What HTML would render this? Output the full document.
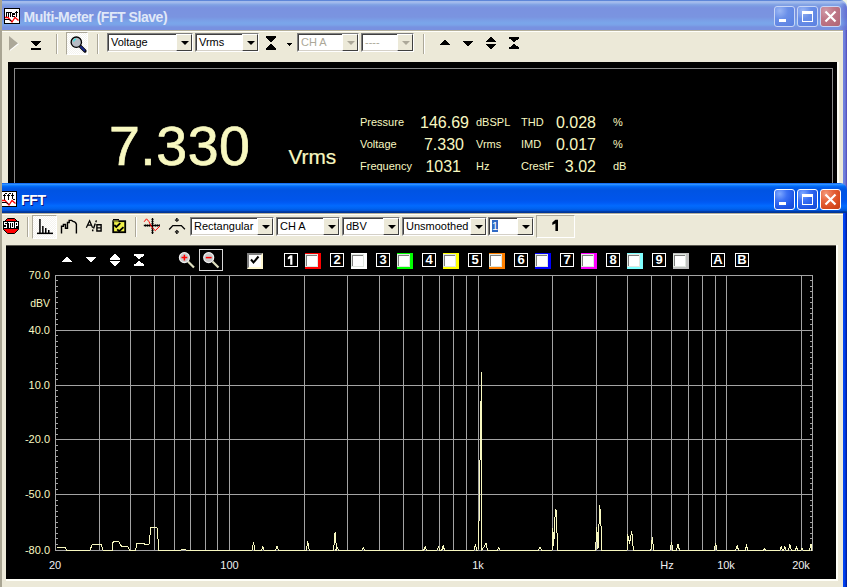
<!DOCTYPE html>
<html><head><meta charset="utf-8"><style>
*{margin:0;padding:0;box-sizing:border-box}
html,body{width:847px;height:587px;overflow:hidden;background:#ece9d8;font-family:"Liberation Sans",sans-serif;position:relative}
.a{position:absolute}
svg{position:absolute;left:0;top:0}
.cream{color:#f8f8c0}
.ttl{font-weight:bold;font-size:13px;white-space:nowrap;line-height:16px}
.t11{font-size:11px;white-space:nowrap;line-height:13px}
.combo{position:absolute;height:19px;background:#fff;border-top:1px solid #808080;border-left:1px solid #808080;border-bottom:1px solid #fff;border-right:1px solid #fff}
.combo .in{position:absolute;left:0;top:0;right:0;bottom:0;border-top:1px solid #404040;border-left:1px solid #404040;border-bottom:1px solid #d4d0c8;border-right:1px solid #d4d0c8}
.combo .txt{position:absolute;left:3px;top:2px;font-size:11px;line-height:13px;color:#000;white-space:nowrap}
.combo .btn{position:absolute;top:0;right:0;width:16px;bottom:0;background:#ece9d8;border-top:1px solid #fff;border-left:1px solid #fff;border-bottom:1px solid #404040;border-right:1px solid #404040}
.combo .btn i{position:absolute;left:4px;top:6px;width:0;height:0;border-left:4px solid transparent;border-right:4px solid transparent;border-top:4px solid #000}
.combo.dis .txt{color:#aca899}
.combo.dis .btn i{border-top-color:#aca899}
.sep{position:absolute;width:2px;border-left:1px solid #aca899;border-right:1px solid #fff}
.press{position:absolute;border-top:1px solid #aca899;border-left:1px solid #aca899;border-bottom:1px solid #fff;border-right:1px solid #fff;background-color:#f4f3ee;background-image:linear-gradient(45deg,#fff 25%,transparent 25%,transparent 75%,#fff 75%),linear-gradient(45deg,#fff 25%,transparent 25%,transparent 75%,#fff 75%);background-size:2px 2px;background-position:0 0,1px 1px}
.nb{position:absolute;width:14px;height:14px;border:1px solid #fff;color:#fff;font-size:13px;font-weight:bold;line-height:12px;text-align:center}
.cb{position:absolute;width:16px;height:16px;background:#fff;border-top:1px solid #808080;border-left:1px solid #808080;border-right:2px solid #f00;border-bottom:2px solid #f00}
.cb i{position:absolute;left:0;top:0;right:0;bottom:0;border-top:1px solid #404040;border-left:1px solid #404040;border-right:1px solid #e0ded4;border-bottom:1px solid #e0ded4}
</style></head><body>
<div class="a" style="left:838px;top:0;width:9px;height:9px;background:#f0f4e4"></div>
<div class="a" style="left:2px;top:0;width:845px;height:30px;border-radius:0 7px 0 0;background:linear-gradient(180deg,#5e86d8 0,#5e86d8 1px,#a4bcec 1px,#a0b8ec 3px,#86a8e6 4px,#7c9ae2 6px,#7a92e0 8px,#7a94e0 17px,#7a9ee6 20px,#7aa6ea 23px,#7aa2e8 25px,#7892e0 27px,#7890e0 30px)"></div>
<div class="a" style="left:843px;top:30px;width:4px;height:160px;background:linear-gradient(90deg,#7282e2,#6e7ed8 50%,#5048b8)"></div>
<div class="a" style="left:837px;top:62px;width:2px;height:130px;background:#fdfdf4"></div>
<div class="a" style="left:2px;top:30px;width:841px;height:32px;background:#ece9d8;border-top:1px solid #b4b09c"><div class="a" style="left:0;top:0;width:841px;height:1px;background:#fffffa"></div></div>
<svg width="847" height="587" style="pointer-events:none"><g transform="translate(4,8)" shape-rendering="crispEdges"><rect x="0" y="0" width="16" height="16" fill="#000"/><rect x="1" y="1" width="14" height="14" fill="#fff"/><rect x="2" y="4" width="6" height="1" fill="#000"/><rect x="2" y="4" width="1" height="5" fill="#000"/><rect x="4" y="4" width="1" height="5" fill="#000"/><rect x="6" y="4" width="1" height="5" fill="#000"/><rect x="8" y="5" width="3" height="1" fill="#000"/><rect x="8" y="5" width="1" height="4" fill="#000"/><rect x="8" y="8" width="3" height="1" fill="#000"/><rect x="9" y="6" width="2" height="1" fill="#000"/><rect x="12" y="3" width="1" height="6" fill="#000"/><rect x="11" y="4" width="3" height="1" fill="#000"/><rect x="1" y="11" width="3" height="1" fill="#000"/></g><g transform="translate(4,8)"><path d="M1,9.5 H4 L8,14 L11,9.5 L14.5,12.5" stroke="#f00" stroke-width="1.3" fill="none"/><path d="M1,11.5 H5 L7.5,13" stroke="#000" stroke-width="1" fill="none"/></g></svg>
<div class="a ttl" style="left:23.5px;top:9px;color:#e0e8f8;font-size:14px;letter-spacing:-0.45px">Multi-Meter (FFT Slave)</div>
<div class="a" style="left:840px;top:2px;width:7px;height:28px;border-radius:0 7px 0 0;background:linear-gradient(90deg,rgba(80,80,200,0),rgba(80,80,200,.55))"></div>
<div class="a" style="left:774px;top:6px;width:21px;height:21px;border:1px solid #c8d6f6;border-radius:3px;background:radial-gradient(circle at 25% 20%,#9ab6f4 0,#6a8fe8 40%,#5a80e0 100%)"></div>
<div class="a" style="left:797px;top:6px;width:21px;height:21px;border:1px solid #c8d6f6;border-radius:3px;background:radial-gradient(circle at 25% 20%,#9ab6f4 0,#6a8fe8 40%,#5a80e0 100%)"></div>
<div class="a" style="left:820px;top:6px;width:21px;height:21px;border:1px solid #c8d6f6;border-radius:3px;background:radial-gradient(circle at 25% 20%,#d09aa8 0,#c07888 40%,#b06474 100%)"></div>
<div class="a" style="left:779px;top:19px;width:7px;height:3px;background:#ffffff"></div>
<div class="a" style="left:802px;top:11px;width:11px;height:11px;border:1px solid #ffffff;border-top-width:3px"></div>
<svg width="847" height="587" style="pointer-events:none"><path d="M825.5,11.5 L835.5,21.5 M835.5,11.5 L825.5,21.5" stroke="#ffffff" stroke-width="2.2"/></svg>
<svg width="847" height="587" style="pointer-events:none"><path d="M10,37 L19,44 L10,51 Z" fill="#fff"/><path d="M9,36 L18,43.3 L9,50.5 Z" fill="#aca899"/><g shape-rendering="crispEdges"><rect x="444.0" y="40" width="2" height="1" fill="#000"/><rect x="443.0" y="41" width="4" height="1" fill="#000"/><rect x="442.0" y="42" width="6" height="1" fill="#000"/><rect x="441.0" y="43" width="8" height="1" fill="#000"/><rect x="440.0" y="44" width="10" height="1" fill="#000"/><rect x="463.0" y="41" width="10" height="1" fill="#000"/><rect x="464.0" y="42" width="8" height="1" fill="#000"/><rect x="465.0" y="43" width="6" height="1" fill="#000"/><rect x="466.0" y="44" width="4" height="1" fill="#000"/><rect x="467.0" y="45" width="2" height="1" fill="#000"/><rect x="490.0" y="37" width="2" height="1" fill="#000"/><rect x="489.0" y="38" width="4" height="1" fill="#000"/><rect x="488.0" y="39" width="6" height="1" fill="#000"/><rect x="487.0" y="40" width="8" height="1" fill="#000"/><rect x="486.0" y="41" width="10" height="1" fill="#000"/><rect x="486.0" y="44" width="10" height="1" fill="#000"/><rect x="487.0" y="45" width="8" height="1" fill="#000"/><rect x="488.0" y="46" width="6" height="1" fill="#000"/><rect x="489.0" y="47" width="4" height="1" fill="#000"/><rect x="490.0" y="48" width="2" height="1" fill="#000"/><rect x="509" y="37" width="10" height="1" fill="#000"/><rect x="509.25" y="38" width="9.5" height="1" fill="#000"/><rect x="510.5" y="39" width="7.0" height="1" fill="#000"/><rect x="511.75" y="40" width="4.5" height="1" fill="#000"/><rect x="513.0" y="41" width="2.0" height="1" fill="#000"/><rect x="513.0" y="44" width="2.0" height="1" fill="#000"/><rect x="511.75" y="45" width="4.5" height="1" fill="#000"/><rect x="510.5" y="46" width="7.0" height="1" fill="#000"/><rect x="509.25" y="47" width="9.5" height="1" fill="#000"/><rect x="509" y="48" width="10" height="1" fill="#000"/><rect x="266" y="36" width="10" height="1" fill="#000"/><rect x="266.0" y="37" width="10" height="1" fill="#000"/><rect x="267.0" y="38" width="8" height="1" fill="#000"/><rect x="268.0" y="39" width="6" height="1" fill="#000"/><rect x="269.0" y="40" width="4" height="1" fill="#000"/><rect x="270.0" y="41" width="2" height="1" fill="#000"/><rect x="270.0" y="44" width="2" height="1" fill="#000"/><rect x="269.0" y="45" width="4" height="1" fill="#000"/><rect x="268.0" y="46" width="6" height="1" fill="#000"/><rect x="267.0" y="47" width="8" height="1" fill="#000"/><rect x="266.0" y="48" width="10" height="1" fill="#000"/><rect x="266" y="49" width="10" height="1" fill="#000"/><rect x="287.0" y="43" width="5" height="1" fill="#000"/><rect x="288.0" y="44" width="3" height="1" fill="#000"/><rect x="289.0" y="45" width="1" height="1" fill="#000"/><rect x="31.0" y="41" width="10" height="1" fill="#000"/><rect x="32.0" y="42" width="8" height="1" fill="#000"/><rect x="33.0" y="43" width="6" height="1" fill="#000"/><rect x="34.0" y="44" width="4" height="1" fill="#000"/><rect x="35.0" y="45" width="2" height="1" fill="#000"/><rect x="31" y="48" width="10" height="2" fill="#000"/></g><path d="M287,43 H292 L289.5,45.5 Z" fill="#000"/></svg>
<div class="sep" style="left:56px;top:34px;height:20px"></div>
<div class="press" style="left:66px;top:32px;width:22px;height:23px"></div>
<svg width="847" height="587" style="pointer-events:none"><path d="M80.5,46.5 L85,51" stroke="#000" stroke-width="3.2" stroke-linecap="round"/><path d="M80.5,46.5 L84.5,50.5" stroke="#1a2a8a" stroke-width="1.8" stroke-linecap="round"/><circle cx="76.3" cy="42.2" r="5.2" fill="#b8bcc4" stroke="#000" stroke-width="1.3"/><path d="M73.5,41.5 Q74,39.5 76,39" stroke="#40e0e0" stroke-width="1.3" fill="none"/></svg>
<div class="sep" style="left:97px;top:34px;height:20px"></div>
<div class="sep" style="left:423px;top:34px;height:20px"></div>
<div class="combo" style="left:107px;top:33px;width:86px"><div class="in"></div><div class="txt">Voltage</div><div class="btn"><i></i></div></div>
<div class="combo" style="left:195px;top:33px;width:64px"><div class="in"></div><div class="txt">Vrms</div><div class="btn"><i></i></div></div>
<div class="combo dis" style="left:297px;top:33px;width:62px"><div class="in"></div><div class="txt">CH A</div><div class="btn"><i></i></div></div>
<div class="combo dis" style="left:361px;top:33px;width:53px"><div class="in"></div><div class="txt">----</div><div class="btn"><i></i></div></div>
<div class="a" style="left:8px;top:62px;width:829px;height:130px;background:#000"></div>
<div class="a" style="left:14px;top:68px;width:819px;height:130px;border:1px solid #8a8a8a"></div>
<div class="a cream" style="left:109px;top:114px;font-size:55.5px;line-height:64px;-webkit-text-stroke:0.7px #f8f8c0;letter-spacing:0.5px">7.330</div>
<div class="a cream" style="left:288.5px;top:144.5px;font-size:20.8px;line-height:24px;-webkit-text-stroke:0.2px #f8f8c0">Vrms</div>
<div class="a" style="left:360px;top:116px;font-size:11px;line-height:13px;color:#f8f8c0;white-space:nowrap">Pressure</div>
<div class="a" style="left:476px;top:116px;font-size:11px;line-height:13px;color:#f8f8c0;white-space:nowrap">dBSPL</div>
<div class="a" style="left:521px;top:116px;font-size:11px;line-height:13px;color:#f8f8c0;white-space:nowrap">THD</div>
<div class="a" style="left:613px;top:116px;font-size:11px;line-height:13px;color:#f8f8c0;white-space:nowrap">%</div>
<div class="a" style="left:360px;top:138px;font-size:11px;line-height:13px;color:#f8f8c0;white-space:nowrap">Voltage</div>
<div class="a" style="left:476px;top:138px;font-size:11px;line-height:13px;color:#f8f8c0;white-space:nowrap">Vrms</div>
<div class="a" style="left:521px;top:138px;font-size:11px;line-height:13px;color:#f8f8c0;white-space:nowrap">IMD</div>
<div class="a" style="left:613px;top:138px;font-size:11px;line-height:13px;color:#f8f8c0;white-space:nowrap">%</div>
<div class="a" style="left:360px;top:160px;font-size:11px;line-height:13px;color:#f8f8c0;white-space:nowrap">Frequency</div>
<div class="a" style="left:476px;top:160px;font-size:11px;line-height:13px;color:#f8f8c0;white-space:nowrap">Hz</div>
<div class="a" style="left:521px;top:160px;font-size:11px;line-height:13px;color:#f8f8c0;white-space:nowrap">CrestF</div>
<div class="a" style="left:613px;top:160px;font-size:11px;line-height:13px;color:#f8f8c0;white-space:nowrap">dB</div>
<div class="a cream" style="left:400px;top:113px;width:69px;text-align:right;font-size:16px;line-height:19px">146.69</div>
<div class="a cream" style="left:400px;top:135px;width:64px;text-align:right;font-size:16px;line-height:19px">7.330</div>
<div class="a cream" style="left:400px;top:157px;width:61px;text-align:right;font-size:16px;line-height:19px">1031</div>
<div class="a cream" style="left:539px;top:113px;width:57px;text-align:right;font-size:16px;line-height:19px">0.028</div>
<div class="a cream" style="left:539px;top:135px;width:57px;text-align:right;font-size:16px;line-height:19px">0.017</div>
<div class="a cream" style="left:539px;top:157px;width:57px;text-align:right;font-size:16px;line-height:19px">3.02</div>
<div class="a" style="left:2px;top:183px;width:845px;height:30px;border-radius:0 7px 0 0;background:linear-gradient(180deg,#0058ee 0%,#3593ff 4%,#288eff 6%,#127dff 8%,#036ffc 10%,#0262ee 14%,#0057e5 20%,#0054e3 24%,#0055eb 56%,#005bf5 66%,#026afe 76%,#0062ef 86%,#0052d6 92%,#0040ab 94%,#003092 100%)"></div>
<div class="a" style="left:843px;top:213px;width:4px;height:374px;background:linear-gradient(90deg,#0444f4 0,#0040ee 40%,#0030c8 65%,#001890 100%)"></div>
<div class="a" style="left:2px;top:213px;width:841px;height:374px;background:#ece9d8;border-top:1px solid #b4b09c"><div class="a" style="left:0;top:0;width:841px;height:1px;background:#fffffa"></div></div>
<div class="a ttl" style="left:21px;top:192px;color:#fff;font-size:14px;letter-spacing:-0.3px;text-shadow:1px 1px 0 #0a1883">FFT</div>
<div class="a" style="left:774px;top:189px;width:21px;height:21px;border:1px solid #ffffff;border-radius:3px;background:radial-gradient(circle at 25% 20%,#7ea8ff 0,#3a70f4 35%,#1c54e4 70%,#1448d0 100%)"></div>
<div class="a" style="left:797px;top:189px;width:21px;height:21px;border:1px solid #ffffff;border-radius:3px;background:radial-gradient(circle at 25% 20%,#7ea8ff 0,#3a70f4 35%,#1c54e4 70%,#1448d0 100%)"></div>
<div class="a" style="left:820px;top:189px;width:21px;height:21px;border:1px solid #ffffff;border-radius:3px;background:radial-gradient(circle at 25% 20%,#f49a7c 0,#e6643c 35%,#d84a1e 70%,#c23c14 100%)"></div>
<div class="a" style="left:779px;top:202px;width:7px;height:3px;background:#ffffff"></div>
<div class="a" style="left:802px;top:194px;width:11px;height:11px;border:1px solid #ffffff;border-top-width:3px"></div>
<svg width="847" height="587" style="pointer-events:none"><path d="M825.5,194.5 L835.5,204.5 M835.5,194.5 L825.5,204.5" stroke="#ffffff" stroke-width="2.2"/></svg>
<svg width="847" height="587" style="pointer-events:none"><g transform="translate(1,191)" shape-rendering="crispEdges"><rect x="0" y="0" width="16" height="16" fill="#000"/><rect x="1" y="1" width="14" height="14" fill="#fff"/><rect x="3" y="3" width="1" height="6" fill="#000"/><rect x="2" y="4" width="3" height="1" fill="#000"/><rect x="4" y="2" width="2" height="1" fill="#000"/><rect x="7" y="3" width="1" height="6" fill="#000"/><rect x="6" y="4" width="3" height="1" fill="#000"/><rect x="8" y="2" width="2" height="1" fill="#000"/><rect x="11" y="2" width="1" height="6" fill="#000"/><rect x="10" y="4" width="3" height="1" fill="#000"/><rect x="12" y="8" width="2" height="1" fill="#000"/><rect x="1" y="11" width="3" height="1" fill="#000"/></g><g transform="translate(1,191)"><path d="M1,9.5 H4 L8,14 L11,9.5 L14.5,12.5" stroke="#f00" stroke-width="1.3" fill="none"/><path d="M1,11.5 H5 L7.5,13" stroke="#000" stroke-width="1" fill="none"/></g></svg>
<div class="sep" style="left:27px;top:217px;height:20px"></div>
<div class="press" style="left:32px;top:215px;width:25px;height:24px"></div>
<div class="sep" style="left:135px;top:217px;height:20px"></div>
<svg width="847" height="587" style="pointer-events:none"><path d="M7.5,218.5 H14.5 L18.5,222.5 V229.5 L14.5,233.5 H7.5 L3.5,229.5 V222.5 Z" fill="#f00" stroke="#000" stroke-width="1"/><rect x="3" y="221" width="16" height="8" fill="#000"/><g shape-rendering="crispEdges" fill="#fff"><rect x="4.0" y="222" width="1.2" height="1"/><rect x="5.0" y="222" width="1.2" height="1"/><rect x="6.0" y="222" width="1.2" height="1"/><rect x="4.0" y="223" width="1.2" height="1"/><rect x="4.0" y="224" width="1.2" height="1"/><rect x="5.0" y="224" width="1.2" height="1"/><rect x="6.0" y="224" width="1.2" height="1"/><rect x="6.0" y="225" width="1.2" height="1"/><rect x="6.0" y="226" width="1.2" height="1"/><rect x="4.0" y="227" width="1.2" height="1"/><rect x="5.0" y="227" width="1.2" height="1"/><rect x="6.0" y="227" width="1.2" height="1"/><rect x="7.6" y="222" width="1.2" height="1"/><rect x="8.6" y="222" width="1.2" height="1"/><rect x="9.6" y="222" width="1.2" height="1"/><rect x="8.6" y="223" width="1.2" height="1"/><rect x="8.6" y="224" width="1.2" height="1"/><rect x="8.6" y="225" width="1.2" height="1"/><rect x="8.6" y="226" width="1.2" height="1"/><rect x="8.6" y="227" width="1.2" height="1"/><rect x="11.2" y="222" width="1.2" height="1"/><rect x="12.2" y="222" width="1.2" height="1"/><rect x="13.2" y="222" width="1.2" height="1"/><rect x="11.2" y="223" width="1.2" height="1"/><rect x="13.2" y="223" width="1.2" height="1"/><rect x="11.2" y="224" width="1.2" height="1"/><rect x="13.2" y="224" width="1.2" height="1"/><rect x="11.2" y="225" width="1.2" height="1"/><rect x="13.2" y="225" width="1.2" height="1"/><rect x="11.2" y="226" width="1.2" height="1"/><rect x="13.2" y="226" width="1.2" height="1"/><rect x="11.2" y="227" width="1.2" height="1"/><rect x="12.2" y="227" width="1.2" height="1"/><rect x="13.2" y="227" width="1.2" height="1"/><rect x="14.8" y="222" width="1.2" height="1"/><rect x="15.8" y="222" width="1.2" height="1"/><rect x="16.8" y="222" width="1.2" height="1"/><rect x="14.8" y="223" width="1.2" height="1"/><rect x="16.8" y="223" width="1.2" height="1"/><rect x="14.8" y="224" width="1.2" height="1"/><rect x="16.8" y="224" width="1.2" height="1"/><rect x="14.8" y="225" width="1.2" height="1"/><rect x="15.8" y="225" width="1.2" height="1"/><rect x="16.8" y="225" width="1.2" height="1"/><rect x="14.8" y="226" width="1.2" height="1"/><rect x="14.8" y="227" width="1.2" height="1"/></g><g fill="#000"><rect x="37" y="232.6" width="16" height="1.5"/><rect x="39.2" y="219" width="1.5" height="14"/><rect x="42.1" y="226" width="1.5" height="7"/><rect x="45" y="228" width="1.5" height="5"/><rect x="48" y="230" width="1.5" height="3"/></g><path d="M61.5,233.5 V226.2 H63.4 V224.5 H65.5 V228.3 H67.5 V222.5 H69.2 V220.4 H71.6 L73,221.4 L74.5,221.8 L75.6,222.8 L76.4,224.2 V233.5" stroke="#000" stroke-width="1.4" fill="none" stroke-linejoin="miter"/><path d="M86.3,227.8 L89.6,220.8 L92.6,227.8 M87.6,225.2 H91.6" stroke="#000" stroke-width="1.25" fill="none"/><path d="M96.4,220.4 L95.8,222.2 M95.3,223.5 L93.5,228.5 M93,229.5 L92.5,231.3" stroke="#000" stroke-width="1.4"/><path d="M96.9,224.8 H101.1 V231 H96.9 Z M96.9,227.9 H101.1" stroke="#000" stroke-width="1.4" fill="none"/><rect x="113.2" y="221.2" width="12" height="11" fill="#f2f24a" stroke="#000" stroke-width="1.8"/><rect x="113" y="219" width="6" height="1.6" fill="#000"/><rect x="113.5" y="220.6" width="5" height="1" fill="#f2f24a"/><path d="M114.3,225 L116.3,226.9 L120.3,223.2 M117.2,229.3 L119.2,231.2 L123.5,227.2" stroke="#000" stroke-width="1.8" fill="none"/><path d="M143.8,225.5 H159.8 M152.5,218 V234" stroke="#000" stroke-width="1.3"/><g fill="#000" opacity="0.45"><rect x="145" y="224" width="1" height="3"/><rect x="147" y="224" width="1" height="3"/><rect x="149" y="224" width="1" height="3"/><rect x="155" y="224" width="1" height="3"/><rect x="157" y="224" width="1" height="3"/><rect x="159" y="224" width="1" height="3"/><rect x="151" y="219" width="3" height="1"/><rect x="151" y="221" width="3" height="1"/><rect x="151" y="223" width="3" height="1"/><rect x="151" y="228" width="3" height="1"/><rect x="151" y="230" width="3" height="1"/><rect x="151" y="232" width="3" height="1"/></g><path d="M144.1,221.8 L146.5,218.8 L148.9,221.5 L151.8,227.4 L155.3,230.6 L159.8,226.2" stroke="#f00" stroke-width="1" fill="none"/><path d="M169.2,229.5 L172.8,225.6 H181.3 L184.9,229.2" stroke="#000" stroke-width="1.3" fill="none"/><path d="M175,219.6 L176.9,221.3 L178.8,219.6" stroke="#000" stroke-width="1.1" fill="none"/><circle cx="176.9" cy="219" r="1" fill="#000"/><path d="M175,232.4 L176.9,230.6 L178.8,232.4" stroke="#000" stroke-width="1.1" fill="none"/><circle cx="176.9" cy="233" r="1" fill="#000"/></svg>
<div class="combo" style="left:190px;top:217px;width:84px"><div class="in"></div><div class="txt">Rectangular</div><div class="btn"><i></i></div></div>
<div class="combo" style="left:276px;top:217px;width:64px"><div class="in"></div><div class="txt">CH A</div><div class="btn"><i></i></div></div>
<div class="combo" style="left:342px;top:217px;width:58px"><div class="in"></div><div class="txt">dBV</div><div class="btn"><i></i></div></div>
<div class="combo" style="left:402px;top:217px;width:85px"><div class="in"></div><div class="txt">Unsmoothed</div><div class="btn"><i></i></div></div>
<div class="combo" style="left:488px;top:217px;width:46px"><div class="in"></div><div class="txt"><span style="background:#316ac5;color:#fff">1</span></div><div class="btn"><i></i></div></div>
<div class="a" style="left:536px;top:215px;width:39px;height:23px;border-top:1px solid #aca899;border-left:1px solid #aca899;border-bottom:1px solid #fff;border-right:1px solid #fff;"></div>
<svg width="847" height="587" style="pointer-events:none"><path d="M555.4,219.8 H558 V231 H555.4 V223.6 L552.3,225 V222.4 Z" fill="#000"/></svg>
<div class="a" style="left:6px;top:245px;width:830px;height:334px;background:#000;border-top:1px solid #5a5850"></div>
<div class="a" style="left:6px;top:579px;width:832px;height:2px;background:#fffff8"></div>
<div class="a" style="left:836px;top:245px;width:2px;height:336px;background:#fffff8"></div>
<svg width="847" height="587" style="pointer-events:none" shape-rendering="crispEdges"><rect x="99" y="275" width="1" height="276" fill="#a4a4a4"/>
<rect x="130" y="275" width="1" height="276" fill="#a4a4a4"/>
<rect x="154" y="275" width="1" height="276" fill="#a4a4a4"/>
<rect x="174" y="275" width="1" height="276" fill="#a4a4a4"/>
<rect x="190" y="275" width="1" height="276" fill="#a4a4a4"/>
<rect x="205" y="275" width="1" height="276" fill="#a4a4a4"/>
<rect x="217" y="275" width="1" height="276" fill="#a4a4a4"/>
<rect x="229" y="275" width="1" height="276" fill="#a4a4a4"/>
<rect x="304" y="275" width="1" height="276" fill="#a4a4a4"/>
<rect x="347" y="275" width="1" height="276" fill="#a4a4a4"/>
<rect x="379" y="275" width="1" height="276" fill="#a4a4a4"/>
<rect x="403" y="275" width="1" height="276" fill="#a4a4a4"/>
<rect x="422" y="275" width="1" height="276" fill="#a4a4a4"/>
<rect x="439" y="275" width="1" height="276" fill="#a4a4a4"/>
<rect x="453" y="275" width="1" height="276" fill="#a4a4a4"/>
<rect x="466" y="275" width="1" height="276" fill="#a4a4a4"/>
<rect x="478" y="275" width="1" height="276" fill="#a4a4a4"/>
<rect x="552" y="275" width="1" height="276" fill="#a4a4a4"/>
<rect x="596" y="275" width="1" height="276" fill="#a4a4a4"/>
<rect x="627" y="275" width="1" height="276" fill="#a4a4a4"/>
<rect x="651" y="275" width="1" height="276" fill="#a4a4a4"/>
<rect x="671" y="275" width="1" height="276" fill="#a4a4a4"/>
<rect x="688" y="275" width="1" height="276" fill="#a4a4a4"/>
<rect x="702" y="275" width="1" height="276" fill="#a4a4a4"/>
<rect x="715" y="275" width="1" height="276" fill="#a4a4a4"/>
<rect x="726" y="275" width="1" height="276" fill="#a4a4a4"/>
<rect x="801" y="275" width="1" height="276" fill="#a4a4a4"/>
<rect x="55" y="275" width="758" height="1" fill="#a4a4a4"/>
<rect x="55" y="330" width="758" height="1" fill="#a4a4a4"/>
<rect x="55" y="385" width="758" height="1" fill="#a4a4a4"/>
<rect x="55" y="439" width="758" height="1" fill="#a4a4a4"/>
<rect x="55" y="494" width="758" height="1" fill="#a4a4a4"/>
<rect x="55" y="550" width="758" height="1" fill="#a4a4a4"/>
<rect x="55" y="275" width="1" height="276" fill="#a4a4a4"/>
<rect x="812" y="275" width="1" height="276" fill="#a4a4a4"/>
<rect x="56" y="280" width="2" height="1" fill="#a4a4a4"/>
<rect x="810" y="280" width="2" height="1" fill="#a4a4a4"/>
<rect x="56" y="286" width="2" height="1" fill="#a4a4a4"/>
<rect x="810" y="286" width="2" height="1" fill="#a4a4a4"/>
<rect x="56" y="291" width="2" height="1" fill="#a4a4a4"/>
<rect x="810" y="291" width="2" height="1" fill="#a4a4a4"/>
<rect x="56" y="297" width="2" height="1" fill="#a4a4a4"/>
<rect x="810" y="297" width="2" height="1" fill="#a4a4a4"/>
<rect x="56" y="302" width="2" height="1" fill="#a4a4a4"/>
<rect x="810" y="302" width="2" height="1" fill="#a4a4a4"/>
<rect x="56" y="308" width="2" height="1" fill="#a4a4a4"/>
<rect x="810" y="308" width="2" height="1" fill="#a4a4a4"/>
<rect x="56" y="313" width="2" height="1" fill="#a4a4a4"/>
<rect x="810" y="313" width="2" height="1" fill="#a4a4a4"/>
<rect x="56" y="319" width="2" height="1" fill="#a4a4a4"/>
<rect x="810" y="319" width="2" height="1" fill="#a4a4a4"/>
<rect x="56" y="324" width="2" height="1" fill="#a4a4a4"/>
<rect x="810" y="324" width="2" height="1" fill="#a4a4a4"/>
<rect x="56" y="335" width="2" height="1" fill="#a4a4a4"/>
<rect x="810" y="335" width="2" height="1" fill="#a4a4a4"/>
<rect x="56" y="341" width="2" height="1" fill="#a4a4a4"/>
<rect x="810" y="341" width="2" height="1" fill="#a4a4a4"/>
<rect x="56" y="346" width="2" height="1" fill="#a4a4a4"/>
<rect x="810" y="346" width="2" height="1" fill="#a4a4a4"/>
<rect x="56" y="352" width="2" height="1" fill="#a4a4a4"/>
<rect x="810" y="352" width="2" height="1" fill="#a4a4a4"/>
<rect x="56" y="357" width="2" height="1" fill="#a4a4a4"/>
<rect x="810" y="357" width="2" height="1" fill="#a4a4a4"/>
<rect x="56" y="363" width="2" height="1" fill="#a4a4a4"/>
<rect x="810" y="363" width="2" height="1" fill="#a4a4a4"/>
<rect x="56" y="368" width="2" height="1" fill="#a4a4a4"/>
<rect x="810" y="368" width="2" height="1" fill="#a4a4a4"/>
<rect x="56" y="374" width="2" height="1" fill="#a4a4a4"/>
<rect x="810" y="374" width="2" height="1" fill="#a4a4a4"/>
<rect x="56" y="379" width="2" height="1" fill="#a4a4a4"/>
<rect x="810" y="379" width="2" height="1" fill="#a4a4a4"/>
<rect x="56" y="390" width="2" height="1" fill="#a4a4a4"/>
<rect x="810" y="390" width="2" height="1" fill="#a4a4a4"/>
<rect x="56" y="396" width="2" height="1" fill="#a4a4a4"/>
<rect x="810" y="396" width="2" height="1" fill="#a4a4a4"/>
<rect x="56" y="401" width="2" height="1" fill="#a4a4a4"/>
<rect x="810" y="401" width="2" height="1" fill="#a4a4a4"/>
<rect x="56" y="407" width="2" height="1" fill="#a4a4a4"/>
<rect x="810" y="407" width="2" height="1" fill="#a4a4a4"/>
<rect x="56" y="412" width="2" height="1" fill="#a4a4a4"/>
<rect x="810" y="412" width="2" height="1" fill="#a4a4a4"/>
<rect x="56" y="417" width="2" height="1" fill="#a4a4a4"/>
<rect x="810" y="417" width="2" height="1" fill="#a4a4a4"/>
<rect x="56" y="423" width="2" height="1" fill="#a4a4a4"/>
<rect x="810" y="423" width="2" height="1" fill="#a4a4a4"/>
<rect x="56" y="428" width="2" height="1" fill="#a4a4a4"/>
<rect x="810" y="428" width="2" height="1" fill="#a4a4a4"/>
<rect x="56" y="434" width="2" height="1" fill="#a4a4a4"/>
<rect x="810" y="434" width="2" height="1" fill="#a4a4a4"/>
<rect x="56" y="445" width="2" height="1" fill="#a4a4a4"/>
<rect x="810" y="445" width="2" height="1" fill="#a4a4a4"/>
<rect x="56" y="450" width="2" height="1" fill="#a4a4a4"/>
<rect x="810" y="450" width="2" height="1" fill="#a4a4a4"/>
<rect x="56" y="456" width="2" height="1" fill="#a4a4a4"/>
<rect x="810" y="456" width="2" height="1" fill="#a4a4a4"/>
<rect x="56" y="461" width="2" height="1" fill="#a4a4a4"/>
<rect x="810" y="461" width="2" height="1" fill="#a4a4a4"/>
<rect x="56" y="467" width="2" height="1" fill="#a4a4a4"/>
<rect x="810" y="467" width="2" height="1" fill="#a4a4a4"/>
<rect x="56" y="472" width="2" height="1" fill="#a4a4a4"/>
<rect x="810" y="472" width="2" height="1" fill="#a4a4a4"/>
<rect x="56" y="478" width="2" height="1" fill="#a4a4a4"/>
<rect x="810" y="478" width="2" height="1" fill="#a4a4a4"/>
<rect x="56" y="483" width="2" height="1" fill="#a4a4a4"/>
<rect x="810" y="483" width="2" height="1" fill="#a4a4a4"/>
<rect x="56" y="489" width="2" height="1" fill="#a4a4a4"/>
<rect x="810" y="489" width="2" height="1" fill="#a4a4a4"/>
<rect x="56" y="500" width="2" height="1" fill="#a4a4a4"/>
<rect x="810" y="500" width="2" height="1" fill="#a4a4a4"/>
<rect x="56" y="505" width="2" height="1" fill="#a4a4a4"/>
<rect x="810" y="505" width="2" height="1" fill="#a4a4a4"/>
<rect x="56" y="511" width="2" height="1" fill="#a4a4a4"/>
<rect x="810" y="511" width="2" height="1" fill="#a4a4a4"/>
<rect x="56" y="516" width="2" height="1" fill="#a4a4a4"/>
<rect x="810" y="516" width="2" height="1" fill="#a4a4a4"/>
<rect x="56" y="522" width="2" height="1" fill="#a4a4a4"/>
<rect x="810" y="522" width="2" height="1" fill="#a4a4a4"/>
<rect x="56" y="527" width="2" height="1" fill="#a4a4a4"/>
<rect x="810" y="527" width="2" height="1" fill="#a4a4a4"/>
<rect x="56" y="533" width="2" height="1" fill="#a4a4a4"/>
<rect x="810" y="533" width="2" height="1" fill="#a4a4a4"/>
<rect x="56" y="538" width="2" height="1" fill="#a4a4a4"/>
<rect x="810" y="538" width="2" height="1" fill="#a4a4a4"/>
<rect x="56" y="544" width="2" height="1" fill="#a4a4a4"/>
<rect x="810" y="544" width="2" height="1" fill="#a4a4a4"/></svg>
<svg width="847" height="587" style="pointer-events:none"><path d="M56.5,547.0 L65.0,547.0 L66.5,550.5 L89.9,550.5 L92.0,544.9 L101.2,544.9 L103.3,550.5 L112.0,550.5 L113.1,541.7 L118.8,541.7 L121.8,546.8 L127.9,546.8 L129.8,550.5 L135.5,550.5 L136.9,543.8 L144.2,543.8 L145.4,544.8 L148.9,544.8 L151.0,527.0 L156.9,527.0 L158.1,539.5 L158.4,550.5 L179.4,550.5 L183.1,549.1 L187.9,550.5 L252.0,550.5 L253.5,542.5 L255.0,550.5 L261.3,550.5 L262.8,546.7 L264.3,550.5 L275.5,550.5 L277.0,545.8 L278.5,550.5 L306.3,550.5 L307.8,541.5 L309.3,550.5 L333.6,550.5 L335.1,532.5 L336.6,550.5 L335.5,550.5 L337.0,547.0 L338.5,550.5 L361.7,550.5 L363.2,547.5 L364.7,550.5 L423.6,550.5 L425.1,546.7 L426.6,550.5 L436.9,550.5 L438.4,546.7 L439.9,550.5 L441.7,550.5 L443.2,546.0 L444.7,550.5 L473.8,550.5 L475.3,544.5 L476.8,550.5 L478.0,550.5 L478.5,521.5 L479.5,520.5 L479.5,460.5 L480.5,459.5 L480.5,401.5 L481.5,400.5 L481.5,371.5 L481.5,550.5 L486.1,543.5 L487.5,550.5 L497.3,550.5 L498.8,547.5 L500.3,550.5 L538.5,550.5 L540.0,546.8 L541.5,550.5 L552.0,550.5 L552.8,528.5 L553.8,545.5 L554.6,520.5 L556.0,509.5 L556.9,530.9 L558.0,550.5 L595.5,550.5 L596.2,538.3 L596.7,526.8 L598.0,548.5 L599.8,505.5 L601.2,528.5 L602.0,550.5 L627.0,550.5 L627.7,534.5 L629.5,543.5 L630.9,535.5 L631.8,531.5 L633.1,547.2 L634.0,550.5 L650.8,550.5 L652.3,537.5 L653.8,550.5 L670.0,550.5 L671.5,542.5 L673.0,550.5 L676.5,550.5 L678.0,544.5 L679.5,550.5 L714.2,550.5 L715.7,543.0 L717.2,550.5 L735.6,550.5 L737.1,545.5 L738.6,550.5 L745.0,550.5 L746.5,545.9 L748.0,550.5 L763.0,550.5 L764.5,549.1 L766.0,550.5 L779.7,550.5 L781.2,546.8 L782.7,550.5 L783.3,550.5 L784.8,546.8 L786.3,550.5 L788.3,550.5 L789.8,544.5 L791.3,550.5 L795.0,550.5 L796.5,547.5 L798.0,550.5 L800.6,550.5 L802.1,548.5 L803.6,550.5 L809.5,550.5 L811.1,543.7 L812.0,550.5" fill="none" stroke="#f8f8c0" stroke-width="1" shape-rendering="crispEdges"/></svg>
<div class="a t11" style="left:0;width:50px;text-align:right;top:269px;color:#f8f8c0">70.0</div>
<div class="a t11" style="left:0;width:50px;text-align:right;top:324px;color:#f8f8c0">40.0</div>
<div class="a t11" style="left:0;width:50px;text-align:right;top:379px;color:#f8f8c0">10.0</div>
<div class="a t11" style="left:0;width:50px;text-align:right;top:433px;color:#f8f8c0">-20.0</div>
<div class="a t11" style="left:0;width:50px;text-align:right;top:488px;color:#f8f8c0">-50.0</div>
<div class="a t11" style="left:0;width:50px;text-align:right;top:544px;color:#f8f8c0">-80.0</div>
<div class="a t11" style="left:0;width:50px;text-align:right;top:297px;color:#f8f8c0;font-size:10.5px">dBV</div>
<div class="a t11" style="left:25px;width:60px;text-align:center;top:559px;color:#f0f0f0">20</div>
<div class="a t11" style="left:199.5px;width:60px;text-align:center;top:559px;color:#f0f0f0">100</div>
<div class="a t11" style="left:448px;width:60px;text-align:center;top:559px;color:#f0f0f0">1k</div>
<div class="a t11" style="left:637px;width:60px;text-align:center;top:559px;color:#f0f0f0">Hz</div>
<div class="a t11" style="left:696px;width:60px;text-align:center;top:559px;color:#f0f0f0">10k</div>
<div class="a t11" style="left:771px;width:60px;text-align:center;top:559px;color:#f0f0f0">20k</div>
<svg width="847" height="587" style="pointer-events:none"><g shape-rendering="crispEdges"><rect x="66.0" y="257" width="2" height="1" fill="#fff"/><rect x="65.0" y="258" width="4" height="1" fill="#fff"/><rect x="64.0" y="259" width="6" height="1" fill="#fff"/><rect x="63.0" y="260" width="8" height="1" fill="#fff"/><rect x="62.0" y="261" width="10" height="1" fill="#fff"/><rect x="86.0" y="257" width="10" height="1" fill="#fff"/><rect x="87.0" y="258" width="8" height="1" fill="#fff"/><rect x="88.0" y="259" width="6" height="1" fill="#fff"/><rect x="89.0" y="260" width="4" height="1" fill="#fff"/><rect x="90.0" y="261" width="2" height="1" fill="#fff"/><rect x="114.0" y="254" width="2" height="1" fill="#fff"/><rect x="113.0" y="255" width="4" height="1" fill="#fff"/><rect x="112.0" y="256" width="6" height="1" fill="#fff"/><rect x="111.0" y="257" width="8" height="1" fill="#fff"/><rect x="110.0" y="258" width="10" height="1" fill="#fff"/><rect x="110" y="259" width="10" height="1" fill="#fff"/><rect x="110.0" y="261" width="10" height="1" fill="#fff"/><rect x="111.0" y="262" width="8" height="1" fill="#fff"/><rect x="112.0" y="263" width="6" height="1" fill="#fff"/><rect x="113.0" y="264" width="4" height="1" fill="#fff"/><rect x="114.0" y="265" width="2" height="1" fill="#fff"/><rect x="134" y="254" width="10" height="1" fill="#fff"/><rect x="134.25" y="255" width="9.5" height="1" fill="#fff"/><rect x="135.5" y="256" width="7.0" height="1" fill="#fff"/><rect x="136.75" y="257" width="4.5" height="1" fill="#fff"/><rect x="138.0" y="258" width="2.0" height="1" fill="#fff"/><rect x="138.0" y="261" width="2.0" height="1" fill="#fff"/><rect x="136.75" y="262" width="4.5" height="1" fill="#fff"/><rect x="135.5" y="263" width="7.0" height="1" fill="#fff"/><rect x="134.25" y="264" width="9.5" height="1" fill="#fff"/><rect x="134" y="265" width="10" height="1" fill="#fff"/></g></svg>
<div class="a" style="left:199px;top:249px;width:24px;height:22px;border:1px solid #d8d8d8"></div>
<svg width="847" height="587" style="pointer-events:none"><path d="M188,261.5 L194,267.5" stroke="#e0e0c0" stroke-width="2.2"/><circle cx="184.4" cy="257.6" r="5" fill="#c8c8c8" stroke="#f0f0f0" stroke-width="1.2"/><path d="M181.5,257.6 H187.3 M184.4,254.7 V260.5" stroke="#f00" stroke-width="1.5"/><path d="M212.5,261.5 L218.5,267.5" stroke="#e0e0c0" stroke-width="2.2"/><circle cx="208.7" cy="257.6" r="5" fill="#c8c8c8" stroke="#f0f0f0" stroke-width="1.2"/><path d="M205.8,257.6 H211.6" stroke="#f00" stroke-width="1.5"/></svg>
<div class="a" style="left:247px;top:253px;width:16px;height:16px;background:#fff;border-top:2px solid #808080;border-left:2px solid #808080;border-right:2px solid #fff8d0;border-bottom:2px solid #fff8d0"></div>
<svg width="847" height="587" style="pointer-events:none"><path d="M251,259.5 L253.5,262.5 L258.5,256.5" stroke="#000" stroke-width="2" fill="none"/></svg>
<div class="nb" style="left:284px;top:253px"></div>
<svg width="847" height="587" style="pointer-events:none"><path d="M290.2,255.3 H292.4 V264.8 H290.2 V258.6 L287.8,259.6 V257.6 Z" fill="#fff"/></svg>
<div class="a" style="left:305px;top:253px;width:16px;height:16px;background:#ff0000"><div class="a" style="left:0;top:1px;width:13px;height:13px;background:#fff;border:1px solid #dfe6df"><div class="a" style="left:0;top:0;width:11px;height:11px;border-top:1px solid #7c7c7c;border-left:1px solid #7c7c7c"></div></div></div>
<div class="nb" style="left:330px;top:253px">2</div>
<div class="a" style="left:351px;top:253px;width:16px;height:16px;background:#ffffff"><div class="a" style="left:0;top:1px;width:13px;height:13px;background:#fff;border:1px solid #dfe6df"><div class="a" style="left:0;top:0;width:11px;height:11px;border-top:1px solid #7c7c7c;border-left:1px solid #7c7c7c"></div></div></div>
<div class="nb" style="left:376px;top:253px">3</div>
<div class="a" style="left:397px;top:253px;width:16px;height:16px;background:#00ff00"><div class="a" style="left:0;top:1px;width:13px;height:13px;background:#fff;border:1px solid #dfe6df"><div class="a" style="left:0;top:0;width:11px;height:11px;border-top:1px solid #7c7c7c;border-left:1px solid #7c7c7c"></div></div></div>
<div class="nb" style="left:422px;top:253px">4</div>
<div class="a" style="left:443px;top:253px;width:16px;height:16px;background:#ffff00"><div class="a" style="left:0;top:1px;width:13px;height:13px;background:#fff;border:1px solid #dfe6df"><div class="a" style="left:0;top:0;width:11px;height:11px;border-top:1px solid #7c7c7c;border-left:1px solid #7c7c7c"></div></div></div>
<div class="nb" style="left:468px;top:253px">5</div>
<div class="a" style="left:489px;top:253px;width:16px;height:16px;background:#ff8000"><div class="a" style="left:0;top:1px;width:13px;height:13px;background:#fff;border:1px solid #dfe6df"><div class="a" style="left:0;top:0;width:11px;height:11px;border-top:1px solid #7c7c7c;border-left:1px solid #7c7c7c"></div></div></div>
<div class="nb" style="left:514px;top:253px">6</div>
<div class="a" style="left:535px;top:253px;width:16px;height:16px;background:#0000ff"><div class="a" style="left:0;top:1px;width:13px;height:13px;background:#fff;border:1px solid #dfe6df"><div class="a" style="left:0;top:0;width:11px;height:11px;border-top:1px solid #7c7c7c;border-left:1px solid #7c7c7c"></div></div></div>
<div class="nb" style="left:560px;top:253px">7</div>
<div class="a" style="left:581px;top:253px;width:16px;height:16px;background:#ff00ff"><div class="a" style="left:0;top:1px;width:13px;height:13px;background:#fff;border:1px solid #dfe6df"><div class="a" style="left:0;top:0;width:11px;height:11px;border-top:1px solid #7c7c7c;border-left:1px solid #7c7c7c"></div></div></div>
<div class="nb" style="left:606px;top:253px">8</div>
<div class="a" style="left:627px;top:253px;width:16px;height:16px;background:#80ffff"><div class="a" style="left:0;top:1px;width:13px;height:13px;background:#fff;border:1px solid #dfe6df"><div class="a" style="left:0;top:0;width:11px;height:11px;border-top:1px solid #7c7c7c;border-left:1px solid #7c7c7c"></div></div></div>
<div class="nb" style="left:652px;top:253px">9</div>
<div class="a" style="left:673px;top:253px;width:16px;height:16px;background:#c0c0c0"><div class="a" style="left:0;top:1px;width:13px;height:13px;background:#fff;border:1px solid #dfe6df"><div class="a" style="left:0;top:0;width:11px;height:11px;border-top:1px solid #7c7c7c;border-left:1px solid #7c7c7c"></div></div></div>
<div class="nb" style="left:711px;top:253px">A</div>
<div class="nb" style="left:735px;top:253px">B</div>
<div class="a" style="left:0;top:0;width:2px;height:587px;background:#a9a593"></div>
</body></html>
